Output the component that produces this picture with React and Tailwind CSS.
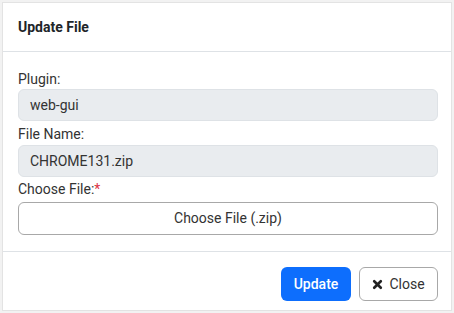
export default function App() {
    return (
        <div className="w-[454px] h-[313px] bg-[#f2f2f2] pt-[2px] px-[2px] pb-[2px] font-['Roboto',sans-serif] text-[14px] text-[#212529]">
            <div className="h-full bg-white border border-[#e3e3e3] flex flex-col">
                {/* Header */}
                <div className="h-[49px] flex items-center px-[15px] border-b border-[#dee2e6]">
                    <h5 className="font-bold text-[14px] leading-none">Update File</h5>
                </div>

                {/* Body */}
                <div className="pl-[15px] pr-[13px] pt-[17px] pb-[16px] flex flex-col border-b border-[#dee2e6]">
                    <label className="leading-[20px] text-[#333]">Plugin:</label>
                    <div className="h-[32px] rounded-[6px] bg-[#e9ecef] border border-[#dee2e6] flex items-center px-[11px] text-[#333]">web-gui</div>
                    <label className="leading-[20px] mt-[3px] text-[#333]">File Name:</label>
                    <div className="h-[32px] mt-[1px] rounded-[6px] bg-[#e9ecef] border border-[#dee2e6] flex items-center px-[11px] text-[#333]">CHROME131.zip</div>
                    <label className="leading-[20px] mt-[2px] text-[#333]">Choose File:<span className="text-[#dc3545]">*</span></label>
                    <button className="h-[33px] mt-[3px] rounded-[6px] bg-white border border-[#a8a8a8] text-[#333] flex items-center justify-center">Choose File (.zip)</button>
                </div>

                {/* Footer */}
                <div className="flex-1 flex items-start justify-end gap-[8px] pr-[13px] pt-[15px]">
                    <button className="h-[34px] w-[70px] rounded-[6px] bg-[#0d6efd] text-white font-medium flex items-center justify-center">Update</button>
                    <button className="h-[34px] w-[79px] rounded-[6px] bg-white border border-[#a8a8a8] text-[#333] flex items-center justify-center gap-[6px]">
                        <svg width="11" height="11" viewBox="0 0 10 10">
                            <path d="M2 2 L8 8 M8 2 L2 8" stroke="#222" strokeWidth="2.4" strokeLinecap="round" />
                        </svg>
                        Close
                    </button>
                </div>
            </div>
        </div>
    )
}
